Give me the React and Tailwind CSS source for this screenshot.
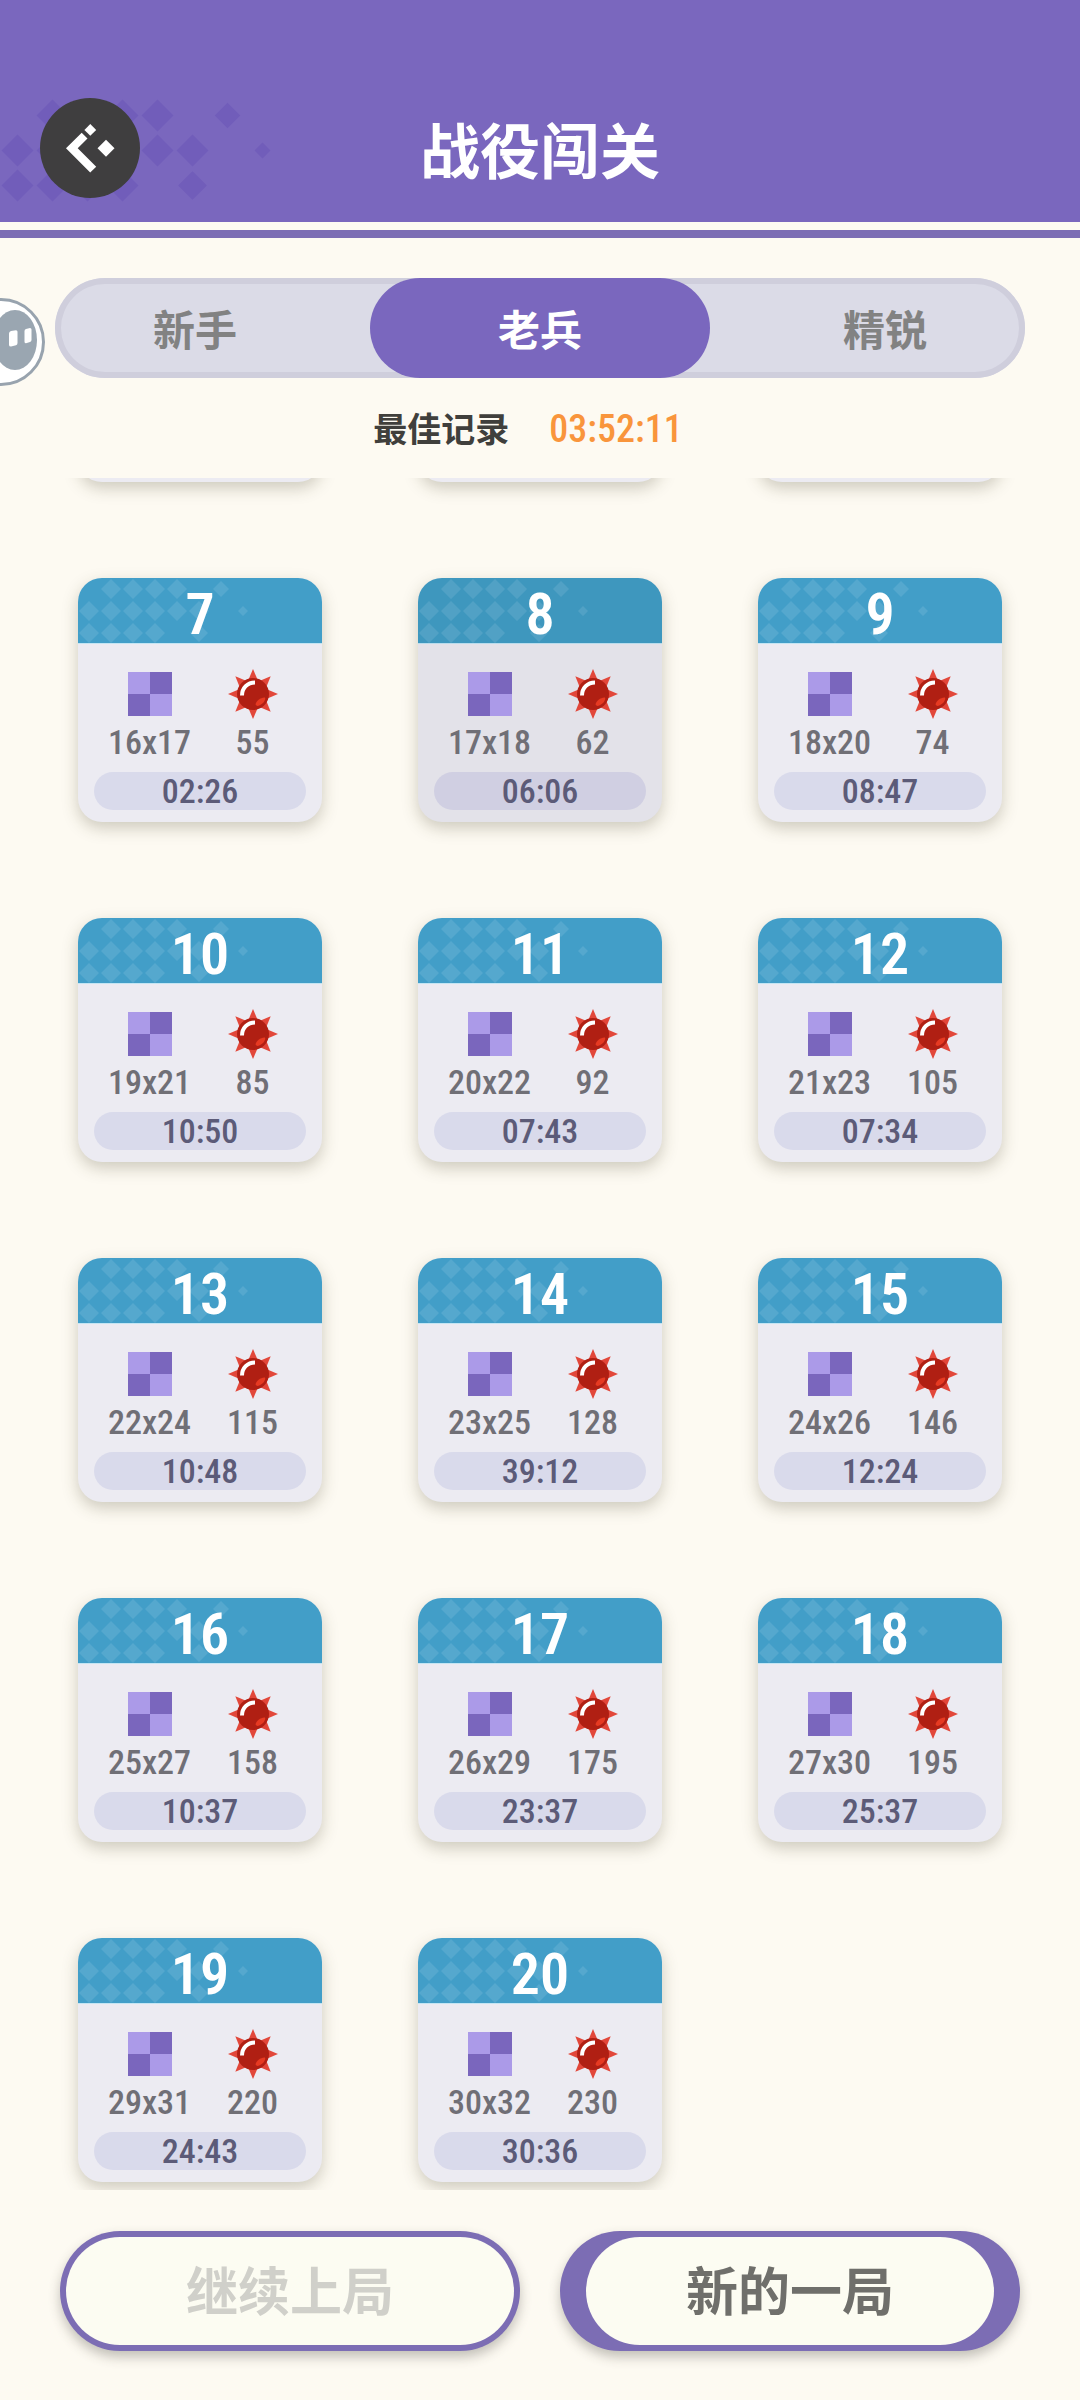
import React, { useState } from "react";
import clsx from "clsx";

const tabs = ["新手", "老兵", "精锐"];

const levels = [
  { id: 7, size: "16x17", mines: 55, time: "02:26" },
  { id: 8, size: "17x18", mines: 62, time: "06:06" },
  { id: 9, size: "18x20", mines: 74, time: "08:47" },
  { id: 10, size: "19x21", mines: 85, time: "10:50" },
  { id: 11, size: "20x22", mines: 92, time: "07:43" },
  { id: 12, size: "21x23", mines: 105, time: "07:34" },
  { id: 13, size: "22x24", mines: 115, time: "10:48" },
  { id: 14, size: "23x25", mines: 128, time: "39:12" },
  { id: 15, size: "24x26", mines: 146, time: "12:24" },
  { id: 16, size: "25x27", mines: 158, time: "10:37" },
  { id: 17, size: "26x29", mines: 175, time: "23:37" },
  { id: 18, size: "27x30", mines: 195, time: "25:37" },
  { id: 19, size: "29x31", mines: 220, time: "24:43" },
  { id: 20, size: "30x32", mines: 230, time: "30:36" },
];

// [cx, cy, half diagonal]
const diamonds = [
  [33, 11, 10], [55, 11, 10], [77, 11, 10], [99, 11, 10], [143, 11, 8],
  [11, 33, 10], [33, 33, 10], [55, 33, 10], [77, 33, 10], [99, 33, 10], [121, 33, 10], [165, 33, 5],
  [11, 55, 10], [33, 55, 10], [55, 55, 10], [77, 55, 10], [121, 55, 9],
];

const diamondPath = ([x, y, r]) =>
  `M${x - r} ${y}L${x} ${y - r}L${x + r} ${y}L${x} ${y + r}Z`;

const DiamondPattern = ({ className }) => (
  <svg viewBox="0 0 176 66" className={className} fill="currentColor" aria-hidden="true">
    <path d={diamonds.map(diamondPath).join("")} />
  </svg>
);

const BoardIcon = () => (
  <svg viewBox="0 0 44 44" className="size-11" aria-hidden="true">
    <path fill="#ab9ae8" d="M0 0h22v22H0zM22 22h22v22H22z" />
    <path fill="#7a66bd" d="M22 0h22v22H22zM0 22h22v22H0z" />
  </svg>
);

const MineIcon = () => (
  <svg viewBox="0 0 50 50" className="size-[50px]" aria-hidden="true">
    <g fill="#e2473a">
      {[0, 45, 90, 135, 180, 225, 270, 315].map((angle) => (
        <path key={angle} d="M25 0L30.500 13H19.500Z" transform={`rotate(${angle} 25 25)`} />
      ))}
    </g>
    <circle cx="25" cy="25" r="16" fill="#b01f13" />
    <path d="M14 26.500C14 19 19.500 13.500 27 13.500" fill="none" stroke="#fff" strokeWidth="4" />
    <path d="M27.500 35.500C28 32 33 28 37 28.500C38.500 31.500 33 37 29 37Z" fill="#e63a22" />
  </svg>
);

const LevelCard = ({ level, pressed }) => (
  <button
    type="button"
    className={clsx(
      "flex flex-col overflow-hidden rounded-3xl text-center shadow-[0_6px_16px_rgba(70,65,40,0.26)]",
      pressed ? "bg-[#e3e2e9]" : "bg-[#ecebf2]"
    )}
  >
    <div
      className={clsx(
        "relative h-[66px] w-full border-b",
        pressed ? "border-[#b9dcec] bg-[#3e97be]" : "border-[#c4e5f3] bg-[#429ec8]"
      )}
    >
      <DiamondPattern className="absolute top-0 left-0 h-[66px] text-white/10" />
      <span className="relative block pt-1 text-[58px] leading-[64px] font-semibold text-white">
        {level.id}
      </span>
    </div>

    <div className="grid w-full grid-cols-2 pt-[25px] pr-[18px] pl-5 text-[34px] leading-8 font-medium text-[#706f76]">
      <div>
        <div className="flex h-[50px] items-center justify-center">
          <BoardIcon />
        </div>
        <div className="mt-[7px]">{level.size}</div>
      </div>
      <div>
        <div className="flex h-[50px] items-center justify-center">
          <MineIcon />
        </div>
        <div className="mt-[7px]">{level.mines}</div>
      </div>
    </div>

    <div
      className={clsx(
        "mx-4 mt-[14px] mb-3 self-stretch rounded-full text-[34px] leading-[38px] font-medium text-[#5c5b78]",
        pressed ? "bg-[#d0cfe2]" : "bg-[#d9daeb]"
      )}
    >
      {level.time}
    </div>
  </button>
);

const FloatingBubble = () => (
  <svg viewBox="0 0 46 90" className="absolute top-[297px] left-0 h-[90px]" aria-hidden="true">
    <circle cx="1" cy="45" r="42.500" fill="#fff" stroke="#98a3ae" strokeWidth="3" />
    <ellipse cx="15" cy="43" rx="22" ry="30" fill="#9aa6b1" />
    <path fill="#fff" d="M9 36.500q0-2 2-2.500l5-.8q1.500 0 1.500 1.500V46q0 2-1.500 2.300L11 49.500q-2 0-2-1.500zM24.500 34q0-1.500 1.500-2l4-1q1.500 0 1.500 1.500V43q0 1.500-1.500 2l-4 1.300q-1.500 0-1.500-1.500z" />
  </svg>
);

const App = () => {
  const [activeTab, setActiveTab] = useState("老兵");

  return (
    <div className="relative flex min-h-screen flex-col bg-[#fdfaf2] font-['Noto_Sans_CJK_SC',sans-serif]">
      <header className="relative flex items-center bg-[#7a67be] px-10 pt-[98px] pb-6">
        <DiamondPattern className="absolute top-[98px] left-0 h-[105px] text-[#715dba]" />
        <button
          type="button"
          aria-label="返回"
          className="relative size-[100px] rounded-full bg-[#3f3e3f]"
        >
          <svg viewBox="0 0 100 100" fill="#fff" aria-hidden="true">
            <path d="M26 50.300L41.700 34.700L47.500 40.500L37.700 50.300L56.200 68.700L50.200 74.500Z" />
            <path d="M50.300 26L56.200 31.900L50.300 37.800L44.400 31.900Z" />
            <path d="M66 41.800L74.500 50.300L66 58.800L57.500 50.300Z" />
          </svg>
        </button>
        <h1 className="flex-1 pr-[100px] text-center text-[60px] leading-[100px] font-bold text-white">
          战役闯关
        </h1>
      </header>
      <div className="mt-2 h-2 bg-[#7c6db4]" />

      <FloatingBubble />

      <div className="mx-[55px] mt-10 rounded-full bg-[#dbdbe7] inset-ring-6 inset-ring-[#cfcedc]">
        <div role="tablist" className="-mx-[30px] grid grid-cols-3 gap-[5px]">
          {tabs.map((tab) => (
            <button
              key={tab}
              type="button"
              role="tab"
              aria-selected={tab === activeTab}
              onClick={() => setActiveTab(tab)}
              className={clsx(
                "rounded-full text-[42px] leading-[100px] font-bold",
                tab === activeTab ? "bg-[#7a67be] text-white" : "text-[#828282]"
              )}
            >
              {tab}
            </button>
          ))}
        </div>
      </div>

      <div className="flex h-[100px] items-baseline justify-center gap-10 pr-6 leading-[100px]">
        <span className="text-[34px] font-bold text-[#403f3c]">最佳记录</span>
        <span className="font-['Roboto_Condensed','Liberation_Sans_Narrow',sans-serif] text-[38px] font-medium text-[#f9953c]">
          03:52:11
        </span>
      </div>

      <main className="flex-1 overflow-hidden px-[78px] pb-2 font-['Roboto_Condensed','Liberation_Sans_Narrow',sans-serif]">
        <div className="-mt-5 mb-24 grid grid-cols-3 gap-24">
          {[4, 5, 6].map((id) => (
            <div
              key={id}
              className="h-6 rounded-b-3xl bg-[#ecebf2] shadow-[0_6px_16px_rgba(70,65,40,0.26)]"
            />
          ))}
        </div>
        <div className="grid grid-cols-3 gap-24">
          {levels.map((level) => (
            <LevelCard key={level.id} level={level} pressed={level.id === 8} />
          ))}
        </div>
      </main>

      <footer className="grid grid-cols-2 gap-10 px-[60px] pt-[41px] pb-[49px] text-[52px] font-bold">
        <button
          type="button"
          disabled
          className="rounded-full bg-[#7c6db4] p-[6px] text-[#d0d0ca] shadow-[0_6px_12px_rgba(60,55,50,0.3)]"
        >
          <span className="block rounded-full bg-[#fcfcf2] pb-1 leading-[104px]">继续上局</span>
        </button>
        <button
          type="button"
          className="rounded-full bg-[#7c6db4] px-[26px] py-[6px] text-[#6f6f6b] shadow-[0_6px_12px_rgba(60,55,50,0.3)]"
        >
          <span className="block rounded-full bg-[#fcfcf2] pb-1 leading-[104px]">新的一局</span>
        </button>
      </footer>
    </div>
  );
};

export default App;
